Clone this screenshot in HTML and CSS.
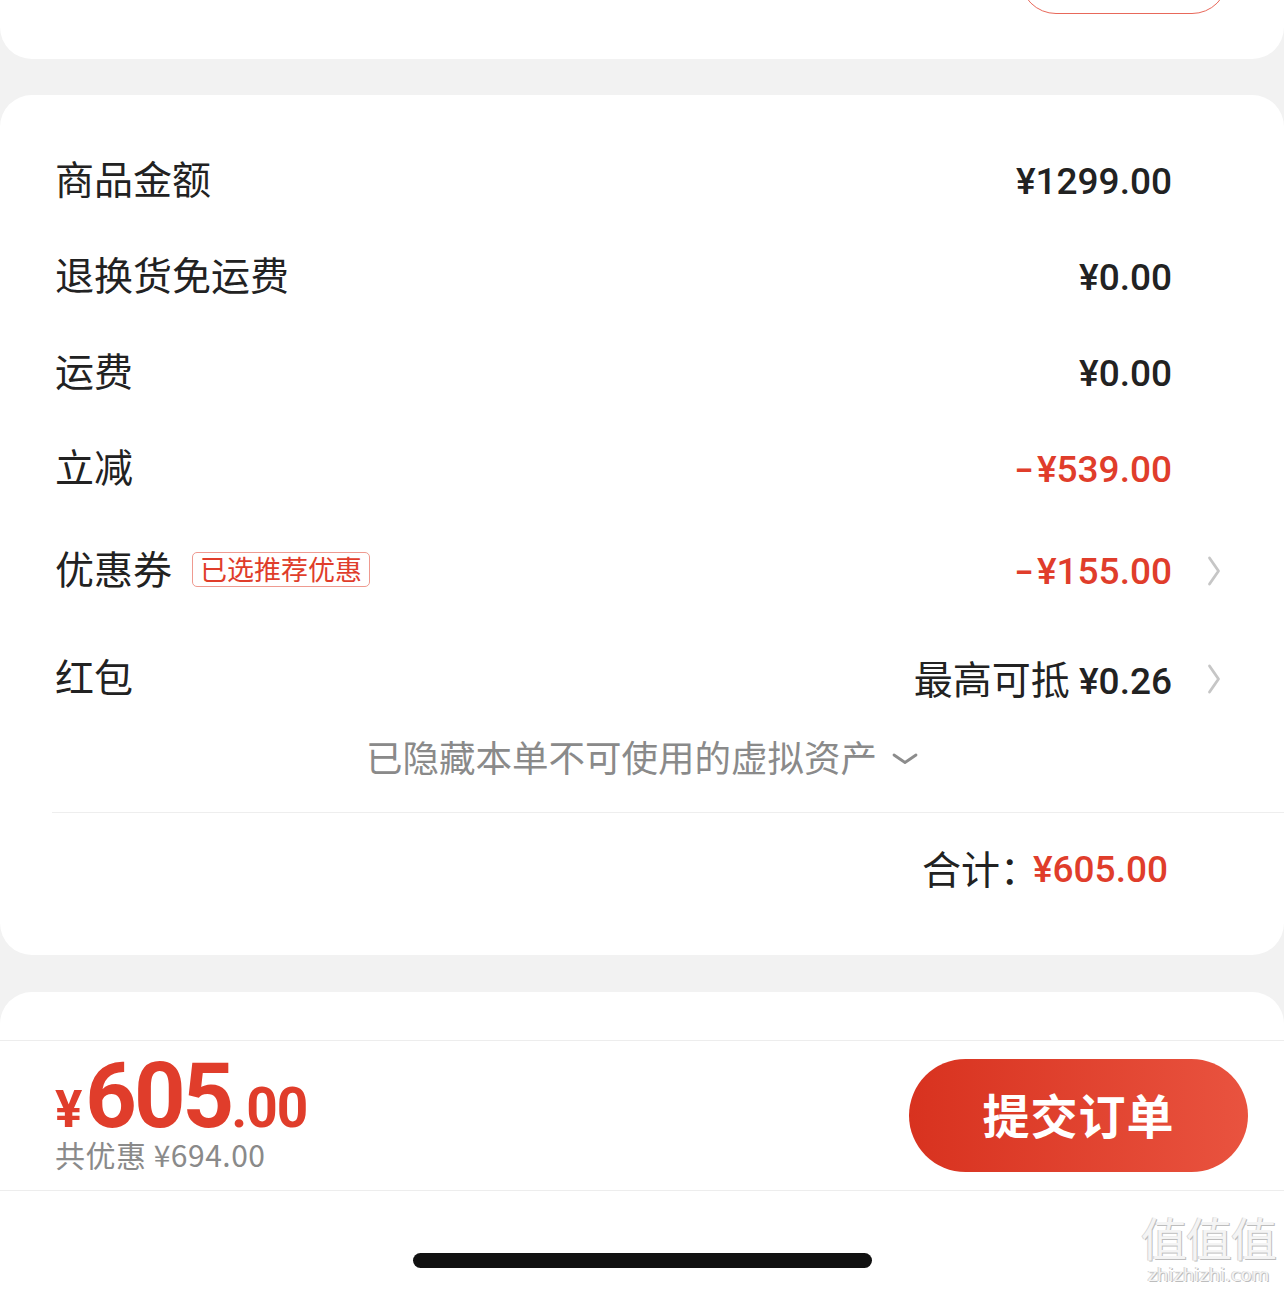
FILE: index.html
```html
<!DOCTYPE html>
<html lang="zh-CN">
<head>
  <meta charset="UTF-8">
  <meta name="viewport" content="width=device-width, initial-scale=1.0">
  <title>确认订单</title>
  <link rel="stylesheet" href="styles.css">
</head>
<body>

  <!-- card above, mostly scrolled away -->
  <div class="card card-top">
    <div class="pill-btn"></div>
  </div>

  <!-- price details -->
  <div class="card card-price">
    <div class="row">
      <span class="label">商品金额</span>
      <span class="value">¥1299.00</span>
      <span class="arrow-slot"></span>
    </div>
    <div class="row">
      <span class="label">退换货免运费</span>
      <span class="value">¥0.00</span>
      <span class="arrow-slot"></span>
    </div>
    <div class="row">
      <span class="label">运费</span>
      <span class="value">¥0.00</span>
      <span class="arrow-slot"></span>
    </div>
    <div class="row">
      <span class="label">立减</span>
      <span class="value red"><span class="minus">-</span>¥539.00</span>
      <span class="arrow-slot"></span>
    </div>
    <div class="row row-tall">
      <span class="label">优惠券</span>
      <span class="tag">已选推荐优惠</span>
      <span class="value red"><span class="minus">-</span>¥155.00</span>
      <span class="arrow-slot">
        <svg class="arrow" width="14" height="30" viewBox="0 0 14 30"><path d="M2.5 2 L11.5 15 L2.5 28" fill="none" stroke="#c6c6c6" stroke-width="2.8" stroke-linecap="round" stroke-linejoin="round"/></svg>
      </span>
    </div>
    <div class="row row-tall">
      <span class="label">红包</span>
      <span class="value"><span class="cn">最高可抵</span> ¥0.26</span>
      <span class="arrow-slot">
        <svg class="arrow" width="14" height="30" viewBox="0 0 14 30"><path d="M2.5 2 L11.5 15 L2.5 28" fill="none" stroke="#c6c6c6" stroke-width="2.8" stroke-linecap="round" stroke-linejoin="round"/></svg>
      </span>
    </div>
    <div class="hidden-assets">
      <span>已隐藏本单不可使用的虚拟资产</span>
      <svg class="down" width="26" height="12" viewBox="0 0 26 12"><path d="M2 2 L13 9.5 L24 2" fill="none" stroke="#8c8c8c" stroke-width="2.8" stroke-linecap="round" stroke-linejoin="round"/></svg>
    </div>
    <div class="divider"></div>
    <div class="row row-total">
      <span class="total-label">合计：</span>
      <span class="value red">¥605.00</span>
      <span class="arrow-slot"></span>
    </div>
  </div>

  <div class="card card-next"></div>

  <!-- submit bar -->
  <div class="submit-bar">
    <div class="pay">
      <div class="pay-price"><span class="yen">¥</span><span class="int">605</span><span class="dec">.00</span></div>
      <div class="pay-save">共优惠 ¥694.00</div>
    </div>
    <button class="submit-btn">提交订单</button>
  </div>

  <div class="home-area">
    <div class="home-indicator"></div>
  </div>

  <div class="watermark">
    <div class="wm-big">值值值</div>
    <div class="wm-small">zhizhizhi.com</div>
  </div>

</body>
</html>
```

FILE: styles.css
```css
/* styles.css */
body {
    margin: 0;
    padding: 0;
    background-color: #f2f2f2;
    font-family: "Noto Sans CJK SC", "Noto Sans", sans-serif;
    color: #222;
    height: 1292px;
    overflow: hidden;
    position: relative;
}

.card {
    background-color: #fff;
}

.card-top {
    height: 59px;
    border-radius: 0 0 32px 32px;
    display: flex;
    justify-content: flex-end;
    align-items: flex-start;
    padding-right: 56px;
    overflow: hidden;
}

.pill-btn {
    width: 206px;
    height: 70px;
    margin-top: -58px;
    border: 1.5px solid #e8685a;
    border-radius: 36px;
}

.card-price {
    margin-top: 36px;
    border-radius: 32px;
    padding: 38px 56px 30px 55px;
}

.row {
    height: 96px;
    display: flex;
    align-items: center;
}

.row-tall {
    height: 108px;
}

.label {
    font-size: 39px;
    line-height: 1;
    padding-bottom: 7px;
}

.tag {
    margin-left: 20px;
    font-size: 27px;
    line-height: 32px;
    color: #e03d2b;
    border: 1px solid #ef9a90;
    border-radius: 5px;
    padding: 0 7px 1px;
    margin-bottom: 3px;
}

.value {
    margin-left: auto;
    font-family: Roboto, "Noto Sans CJK SC", sans-serif;
    font-weight: 500;
    font-size: 37px;
    line-height: 1;
    color: #222;
}

.minus {
    display: inline-block;
    transform: scaleX(1.5);
    margin: 0 6px 0 2px;
}

.value .cn {
    font-family: "Noto Sans CJK SC", sans-serif;
    font-weight: 400;
    font-size: 39px;
}

.red {
    color: #e03d2b;
}

.arrow-slot {
    width: 56px;
    display: flex;
    justify-content: flex-end;
    padding-right: 7px;
    box-sizing: border-box;
}

.hidden-assets {
    height: 46px;
    margin-bottom: 33px;
    display: flex;
    align-items: center;
    justify-content: center;
    gap: 15px;
    font-size: 36.5px;
    color: #8a8a8a;
    margin-right: -56px;
    margin-left: -55px;
}

.down {
    margin-top: 6px;
}

.divider {
    height: 1px;
    background-color: #eeeeee;
    margin-left: -3px;
    margin-right: -56px;
}

.row-total {
    height: 112px;
}

.total-label {
    margin-left: auto;
    font-size: 39px;
    line-height: 1;
    padding-bottom: 4px;
}

.row-total .value {
    margin-left: -6px;
    margin-right: 4px;
}

.card-next {
    margin-top: 37px;
    height: 48px;
    border-radius: 32px 32px 0 0;
}

.submit-bar {
    height: 149px;
    background-color: #fff;
    border-top: 1px solid #ededed;
    border-bottom: 1px solid #ededed;
    display: flex;
    align-items: center;
    justify-content: space-between;
    padding: 0 36px 0 55px;
}

.pay {
    display: flex;
    flex-direction: column;
}

.pay-price {
    font-family: Roboto, sans-serif;
    font-weight: 700;
    color: #e03d2b;
    line-height: 72px;
    height: 72px;
    display: flex;
    align-items: baseline;
}

.yen {
    font-size: 51px;
    margin-right: 3px;
}

.int {
    font-size: 90px;
    letter-spacing: -3px;
}

.dec {
    font-size: 55px;
    letter-spacing: -1px;
}

.pay-save {
    font-size: 30px;
    color: #8a8a8a;
    line-height: 34px;
    margin-top: 4px;
    letter-spacing: 0.5px;
}

.submit-btn {
    width: 339px;
    height: 113px;
    border: none;
    border-radius: 57px;
    background: linear-gradient(90deg, #d8321f, #e9533f);
    color: #fff;
    font-family: "Noto Sans CJK SC", sans-serif;
    font-weight: 700;
    font-size: 47px;
    letter-spacing: 1px;
    padding: 0 0 4px;
}

.home-area {
    background-color: #fff;
    height: 102px;
    display: flex;
    justify-content: center;
    padding-top: 62px;
    box-sizing: border-box;
}

.home-indicator {
    width: 459px;
    height: 15px;
    border-radius: 8px;
    background-color: #111;
}

.watermark {
    position: absolute;
    right: 8px;
    bottom: 6px;
    text-align: center;
    color: #f4f4f4;
    text-shadow: 1px 1px 0 #bdbdbd, -1px 0 0 #d4d4d4;
}

.wm-big {
    font-size: 46px;
    line-height: 56px;
    letter-spacing: -1px;
}

.wm-small {
    font-family: "DejaVu Sans", sans-serif;
    font-size: 18px;
    line-height: 22px;
}
```
